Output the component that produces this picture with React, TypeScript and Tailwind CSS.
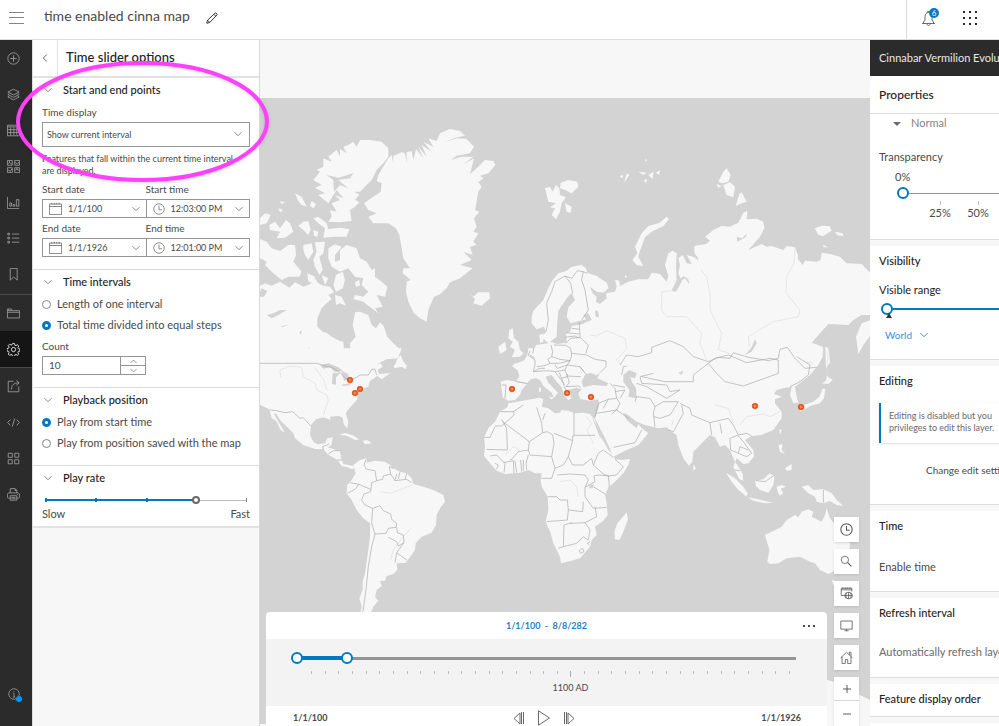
import React from "react";

type IconProps = { className?: string; children: React.ReactNode; box?: number };

function Icon({ className = "size-[14px]", children, box = 16 }: IconProps) {
  return (
    <svg viewBox={`0 0 ${box} ${box}`} className={className} fill="none" stroke="currentColor" strokeWidth={1} aria-hidden="true">
      {children}
    </svg>
  );
}

const Chevron = ({ className = "size-2 text-[#858585]" }: { className?: string }) => (
  <Icon className={className} box={8}><path d="M.5 2.2 4 5.7 7.5 2.2" /></Icon>
);

const ClockIcon = ({ className = "size-3" }: { className?: string }) => (
  <Icon className={className}><circle cx="8" cy="8" r="7" /><path d="M8 3.5V9h4" /></Icon>
);

const CalendarIcon = () => (
  <Icon className="size-[13px] shrink-0 text-[#6a6a6a]">
    <path d="M.5 2.5h15v13H.5zM.5 5.5h15M3.5 1v2M6.500 1v2M9.500 1v2M12.500 1v2" />
  </Icon>
);

type NavItem = { label: string; icon: React.ReactNode; active?: boolean };

const contentNav: NavItem[] = [
  { label: "Add", icon: <><circle cx="8" cy="8" r="7" /><path d="M8 4v8M4 8h8" /></> },
  { label: "Layers", icon: <path d="M8 1.500 15 5 8 8.500 1 5zM3 7 1 8l7 3.500L15 8l-2-1M3 10l-2 1 7 3.500 7-3.500-2-1" /> },
  { label: "Tables", icon: <path d="M.5 1.500h15v13H.5zM.5 3.500h15M.5 7h15M.5 10.500h15M4.500 4v10M8.500 4v10M12 4v10" /> },
  { label: "Basemap", icon: <path d="M.5.5h6v6h-6zM9.500.5h6v6h-6zM.5 9.500h6v6h-6zM9.500 9.500h6v6h-6zM1 5l2-2 3 2M10 3l3 2 2-3M1 12l3 2 2-3M10 13l2-2 3 2M3 1v2M12 10v2" /> },
  { label: "Charts", icon: <path d="M.5 1v14.500H15M3.500 8.500h2v4h-2zM7.500 10.500h2v2h-2zM11.500 4.500h3v8h-3z" /> },
  { label: "Legend", icon: <path d="M1 1.500h2v2H1zM1 6.500h2v2H1zM1 11.500h2v2H1zM6 2.500h9M6 7.500h9M6 12.500h9" /> },
  { label: "Bookmarks", icon: <path d="M4 .5h8.500v14.500l-4.250-4L4 15z" /> },
];

const mapNav: NavItem[] = [
  { label: "Save and open", icon: <path d="M.5 13.500v-11h5l1 2h9v9zM.5 6.500h15M2 2.500v2h4" /> },
  {
    label: "Map properties",
    active: true,
    icon: (
      <>
        <path d="M6.800.7h2.400l.5 2 1.300.6 1.900-1.100 1.600 1.600-1.100 1.900.6 1.300 2 .5v2.400l-2 .5-.6 1.300 1.100 1.900-1.600 1.600-1.900-1.100-1.300.6-.5 2H6.800l-.5-2-1.300-.6-1.900 1.100-1.600-1.600 1.100-1.900-.6-1.300-2-.5V6.800l2-.5.6-1.300L1.500 3.100l1.600-1.600L5 2.600 6.300 2z" />
        <circle cx="8" cy="8" r="2.600" />
      </>
    ),
  },
];

const shareNav: NavItem[] = [
  { label: "Share map", icon: <path d="M8 1.500H1.500v13h13V8M5.500 11.500c0-5 2.500-8 9-8M11.500.5l3.500 3-3.500 3" /> },
  { label: "Embed map", icon: <path d="M4 4.500.8 8 4 11.500M12 4.500 15.200 8 12 11.500M9.500 3l-3 10" /> },
  { label: "Create app", icon: <path d="M1.500 1.500h5v5h-5zM9.500 1.500h5v5h-5zM1.500 9.500h5v5h-5zM9.500 9.500h5v5h-5z" /> },
  { label: "Print", icon: <path d="M4 6V.8h6l2 2V6M10 1v2h2M4 12.500H1.500l-1-1v-4L2 6h12l1.500 1.500v4l-1 1H12M4 9.500h8v5.500H4zM5.500 11.500h5M5.500 13.200h5M12.500 8h1" /> },
];

function NavList({ items }: { items: NavItem[] }) {
  return (
    <>
      {items.map((item) => (
        <button
          key={item.label}
          aria-label={item.label}
          className={item.active ? "flex h-9 w-full items-center pl-[7px] bg-[#151515] text-white" : "flex h-9 w-full items-center pl-[7px] text-[#a3a3a3]"}
        >
          <Icon className="size-[13px]">{item.icon}</Icon>
        </button>
      ))}
    </>
  );
}

function Section({ title, className, children }: { title: string; className: string; children: React.ReactNode }) {
  return (
    <section className={`border-b border-[#dcdcdc] px-[9px] ${className}`}>
      <h3>
        <button className="flex h-6 items-center gap-[11px] pl-[2px] text-[11px] font-medium text-[#222]">
          <Chevron />
          {title}
        </button>
      </h3>
      {children}
    </section>
  );
}

function PickerField({ id, label, value, icon }: { id: string; label: string; value: string; icon: React.ReactNode }) {
  return (
    <div className="min-w-0 flex-1 not-first:-ml-px">
      <label htmlFor={id} className="block h-5 text-[10px] leading-5">{label}</label>
      <div className="flex h-[19px] items-center gap-1.5 border border-[#959595] px-[6px]">
        {icon}
        <input id={id} defaultValue={value} className="w-0 min-w-0 flex-1 text-[9px] outline-none" />
        <Chevron />
      </div>
    </div>
  );
}

function Radio({ name, label, checked }: { name: string; label: string; checked?: boolean }) {
  return (
    <label className="flex h-[21px] items-center gap-1.5 text-[11px]">
      <input
        type="radio"
        name={name}
        defaultChecked={checked}
        className="size-[9px] appearance-none rounded-full border border-[#858585] bg-white checked:border-[3px] checked:border-[#0079c1]"
      />
      {label}
    </label>
  );
}

function OptionsPanel() {
  return (
    <aside className="flex w-[227px] shrink-0 flex-col border-r border-[#d8d8d8] bg-[#f7f7f7] text-[#4a4a4a]">
      <header className="flex h-[38px] shrink-0 items-center border-b-2 border-[#e2e2e2] bg-white">
        <button aria-label="Back" className="flex h-full w-[25px] items-center justify-center border-r border-[#e2e2e2]">
          <Chevron className="size-2 rotate-90 text-[#6a6a6a]" />
        </button>
        <h2 className="pl-2 text-[13px] font-medium text-[#222]">Time slider options</h2>
      </header>
      <div className="border-b-2 border-[#e2e2e2] bg-white">
        <Section title="Start and end points" className="pb-3">
          <label htmlFor="display" className="block h-5 text-[10px] leading-5">Time display</label>
          <div className="relative">
            <select id="display" className="block h-[25px] w-full appearance-none border border-[#959595] px-1 text-[9px]">
              <option>Show current interval</option>
            </select>
            <Chevron className="pointer-events-none absolute top-2 right-2 size-2 text-[#858585]" />
          </div>
          <p className="mt-1.5 mb-0.5 h-6 pr-3 text-[9px] leading-3">Features that fall within the current time interval are displayed.</p>
          <div className="flex">
            <PickerField id="sd" label="Start date" value="1/1/100" icon={<CalendarIcon />} />
            <PickerField id="st" label="Start time" value="12:03:00 PM" icon={<ClockIcon className="size-3 shrink-0 text-[#6a6a6a]" />} />
          </div>
          <div className="flex">
            <PickerField id="ed" label="End date" value="1/1/1926" icon={<CalendarIcon />} />
            <PickerField id="et" label="End time" value="12:01:00 PM" icon={<ClockIcon className="size-3 shrink-0 text-[#6a6a6a]" />} />
          </div>
        </Section>
        <Section title="Time intervals" className="pb-3">
          <Radio name="mode" label="Length of one interval" />
          <Radio name="mode" label="Total time divided into equal steps" checked />
          <label htmlFor="count" className="block h-5 text-[10px] leading-5">Count</label>
          <div className="flex h-[19px] w-[104px] border border-[#959595]">
            <input id="count" defaultValue="10" className="w-0 flex-1 px-1.5 text-[10px] outline-none" />
            <div className="flex w-[25px] flex-col divide-y divide-[#959595] border-l border-[#959595]">
              <button aria-label="Increase" className="flex flex-1 items-center justify-center"><Chevron className="size-[7px] rotate-180 text-[#858585]" /></button>
              <button aria-label="Decrease" className="flex flex-1 items-center justify-center"><Chevron className="size-[7px] text-[#858585]" /></button>
            </div>
          </div>
        </Section>
        <Section title="Playback position" className="pb-[11px]">
          <Radio name="pos" label="Play from start time" checked />
          <Radio name="pos" label="Play from position saved with the map" />
        </Section>
        <section className="px-[9px]">
          <h3>
            <button className="flex h-6 items-center gap-[11px] pl-[2px] text-[11px] font-medium text-[#222]"><Chevron />Play rate</button>
          </h3>
          <div className="relative mt-1.5 flex h-2 items-center px-[3px]">
            <div className="h-0.5 w-3/4 bg-[#0079c1]" />
            <div className="h-px flex-1 bg-[#bdbdbd]" />
            <div className="absolute inset-x-[3px] top-0.5 flex h-1 justify-between">
              {[0, 1, 2, 3, 4].map((n) => <span key={n} className={n < 4 ? "w-0.5 bg-[#0079c1]" : "w-px bg-[#858585]"} />)}
            </div>
            <input
              type="range"
              aria-label="Play rate"
              min={0}
              max={4}
              defaultValue={3}
              className="absolute inset-x-0 h-2 appearance-none bg-transparent [&::-webkit-slider-thumb]:size-2 [&::-webkit-slider-thumb]:appearance-none [&::-webkit-slider-thumb]:rounded-full [&::-webkit-slider-thumb]:border-2 [&::-webkit-slider-thumb]:border-[#6a6a6a] [&::-webkit-slider-thumb]:bg-white"
            />
          </div>
          <div className="flex h-[22px] items-center justify-between pb-0.5 text-[11px]"><span>Slow</span><span>Fast</span></div>
        </section>
      </div>
    </aside>
  );
}

/* Each group is digitised at three units per pixel. */
const americasNorth = [
  "M-5 575 15 565 35 572 60 560 88 578 105 562 130 575 150 568 165 550 175 565 190 572 210 575 222 592 205 600 215 612 200 625 185 640 172 670 172 695 190 712 197 712 215 725 240 738 250 740 252 770 265 780 272 775 270 745 287 725 278 690 285 652 300 650 325 660 335 690 348 700 360 682 372 695 382 725 400 745 422 765 415 790 380 793 340 812H-5Z",
  "M385 190 395 180 400 205 400 183 425 172 435 175 440 205 440 172 455 168 460 195 468 162 490 190 475 155 500 185 485 150 515 170 490 140 520 155 505 130 530 138 540 115 570 102 600 108 615 122 585 128 555 142 590 130 620 132 642 155 630 175 590 182 572 195 605 185 640 185 610 208 642 190 630 238 660 210 675 195 700 198 706 210 685 235 660 242 670 250 655 262 665 275 655 290 650 320 645 345 658 350 642 370 650 395 640 410 655 415 640 440 650 450 630 455 638 480 610 470 635 495 600 510 638 520 600 550 570 562 560 580 540 598 522 605 505 645 500 680 480 670 462 655 445 620 438 590 440 560 452 555 428 535 430 520 450 520 430 490 425 460 418 420 408 400 385 385 340 385 325 365 350 355 325 345 312 325 340 305 362 290 365 265 350 258 355 240Z",
  "M265 150 280 140 290 155 300 135 330 135 365 140 385 160 385 185 370 205 350 225 335 255 320 270 300 290 280 290 298 298 285 315 298 322 285 335 270 345 275 378 240 382 205 380 215 365 210 345 230 350 215 325 240 315 225 300 250 310 230 285 205 325 175 300 195 295 165 278 185 270 160 255 180 230 170 225 190 215 190 190 215 200 205 185 230 165 240 185 240 162 260 175 250 155Z",
  "M160 370 175 365 200 385 205 402 240 398 268 402 260 425 220 425 190 428 195 400 175 385Z",
  "M160 405 175 410 172 425 162 422ZM130 380 145 378 152 405 145 420 130 405 115 392ZM105 295 125 305 140 335 125 330 115 318ZM60 318 75 322 65 328ZM55 340 70 345 60 352ZM155 318 168 328 160 340 150 332ZM-5 375 15 355 32 360 20 385 0 390ZM28 390 45 380 60 400 78 375 90 385 100 410 75 428 50 430 60 410 30 405Z",
  "M-5 430 20 440 35 460 60 468 85 450 105 450 108 480 100 500 125 530 118 545 85 545 65 555 40 535 15 510 20 500 0 490ZM130 450 155 445 160 470 145 495 135 480 130 465ZM165 442 195 440 190 475 178 485 188 525 178 540 165 515 160 495 170 470ZM142 535 165 545 160 565 145 560ZM185 540 205 550 195 570Z",
  "M205 460 225 448 245 455 225 480 225 500 240 495 240 465 260 450 290 460 300 490 320 500 335 525 345 520 345 545 365 560 382 575 375 605 350 600 368 635 345 640 355 655 335 640 310 620 280 612 285 600 310 605 325 590 305 570 310 550 285 545 265 520 240 530 215 515 205 490ZM228 540 248 530 255 555 248 580 228 590 220 570ZM225 600 245 605 258 632 240 625 228 630ZM285 562 298 555 300 572 288 575ZM108 600 118 595ZM628 595 640 605 655 592 688 592 690 610 665 632 640 625 645 612Z",
  "M405 812 410 795 422 780 428 795 438 812Z",
];

const americasSouth = [
  "M-5-5H425L420 8 395 20 362 22 335 45 362 40 368 50 352 60 358 72 385 70 392 68 365 88 352 78 330 92 325 110 305 116 292 130 292 148 268 175 257 190 265 215 262 235 252 225 247 202 235 198 210 200 212 210 190 202 168 208 153 225 150 255 160 275 172 283 195 280 202 265 218 262 214 285 203 292 240 303 243 325 250 342 265 345 280 348 287 352 275 358 262 352 245 348 232 330 205 314 190 298 165 297 130 285 105 265 100 250 82 232 60 210 48 190 42 192 55 215 75 248 62 240 48 212 35 205 28 178 0 165H-5Z",
  "M400 48 415 35 420 20 430 38 440 45 438 58 425 50 405 55ZM238 254 255 249 278 256 298 268 285 270 262 258ZM308 273 320 270 336 279 315 283ZM284 280 294 284Z",
  "M280 345 300 330 320 325 320 338 345 332 375 335 390 345 400 355 420 365 440 370 455 385 460 402 495 412 525 422 550 435 555 455 540 475 530 495 528 525 515 548 485 560 467 580 465 600 450 622 437 638 410 640 412 660 400 672 380 678 375 692 360 693 365 708 350 720 345 740 355 752 340 770 330 795H300L305 770 298 745 308 720 308 695 315 670 325 600 330 560 330 520 310 505 290 480 275 450 260 430 262 405 275 390 287 370Z",
];

const eurasiaNorth = [
  "M95 590 100 572 130 540 145 505 158 480 175 460 200 452 215 440 245 435 258 445 262 458 290 468 320 488 326 505 310 518 290 515 270 500 278 520 290 530 288 545 300 552 320 535 318 520 345 515 350 500 345 480 358 482 360 498 385 485 415 478 445 478 455 458 480 462 500 485 505 468 495 435 505 400 518 392 530 400 528 440 530 480 515 512 528 515 545 485 535 460 540 435 535 415 548 405 560 430 575 432 560 405 580 410 600 425 603 450 592 410 583 400 583 378 618 372 630 362 615 350 640 330 665 318 690 320 715 308 730 278 742 272 740 298 770 296 790 305 793 325 780 350 745 390 785 372 800 380 815 378 850 390 860 378 885 382 895 408 892 415 908 435 915 422 950 425 962 420 965 398 990 402 1020 410 1040 430 1085 432 1112 460V585L1085 585 1060 600 1045 615 985 612 960 640 935 668 968 680 968 710 955 735 935 755H60L35 738 75 720 100 695 108 675 145 670 125 652 138 635 132 620 110 628 95 610Z",
  "M135 205 150 200 158 215 168 195 178 205 180 225 198 232 185 250 180 275 168 298 155 285 165 265 150 262 168 250 145 245ZM182 188 205 180 232 185 235 200 215 220 195 210 180 205ZM195 250 215 260 212 278 200 275Z",
  "M358 168 370 165 368 175ZM380 160 388 165 372 188ZM415 155 440 158 430 165ZM445 165 460 155 458 178ZM468 158 480 150 478 165ZM430 180 442 178 438 190ZM435 118 442 120 438 125Z",
  "M500 290 507 297 490 318 455 335 435 352 420 392 415 410 430 438 410 435 397 420 412 400 405 380 425 340 445 318 480 308Z",
  "M655 185 670 155 680 145 692 165 685 185 665 190ZM650 192 665 198 655 203ZM670 195 690 187 705 200 700 232 680 225ZM718 222 725 217 740 245 725 250 707 258ZM945 325 965 317 988 318 995 332 970 348 955 345ZM1005 335 1028 340 1030 348 1012 346ZM970 375 985 382 970 382ZM645 146 652 148ZM375 465 382 470 375 473Z",
  "M28 630 38 625 42 655 55 665 60 690 70 700 60 710 35 712 45 690 30 680 38 665 25 655ZM-5 680 15 665 20 690 0 702ZM118 645 130 640 130 665 120 668ZM1112 600 1085 610 1068 650 1075 703 1090 675 1112 645ZM976 680 986 685 990 728 978 745Z",
];

const oldWorldSouth = [
  "M145-5 142 15 130 35 100 42 112 58 118 78 110 93 140 100 152 88 170 85 182 92 190 108 215 128 222 143 234 128 205 98 197 80 215 75 230 95 245 112 252 135 265 150 275 145 265 120 290 113 305 118 295 130 300 147 330 152 355 148 358 165 350 190 345 205 360 235 385 285 400 320 440 300 475 285 505 250 485 235 475 222 470 235 440 210 430 190 440 192 470 215 495 225 535 235 560 232 575 245 590 255 595 285 610 325 627 348 637 335 640 305 665 280 690 255 705 262 720 290 735 285 750 300 762 330 775 350 788 372 790 392 778 388 760 350 770 325 790 342 805 340 822 320 820 300 795 270 815 258 845 255 880 240 905 205 905 185 885 160 885 148 905 140 882 132 890 120 910 115 935 110 930 135 940 160 955 158 948 130 945 110 965 95 990 75 1010 50 1025 20 1030-5Z",
  "M62 95 80 90 110 95 140 102 125 120 120 135 105 150 85 152 68 142 65 120Z",
  "M85 160 105 157 140 150 180 143 190 148 185 170 205 175 225 190 240 188 245 180 265 182 285 190 310 188 330 192 345 210 355 240 368 270 385 300 400 315 405 328 425 330 450 327 445 345 430 370 405 395 385 412 375 435 380 460 383 495 370 512 345 530 350 555 335 570 330 590 300 625 275 632 243 640 240 620 220 580 212 550 197 515 205 480 203 440 185 410 182 390 185 370 165 370 145 360 120 368 75 372 50 362 30 340 12 318 15 290 12 262 25 235 45 215 60 185 82 172Z",
  "M440 487 444 508 430 545 418 570 405 568 403 545 412 520 425 505ZM640 343 648 355 640 362ZM738 368 765 385 790 410 803 430 800 440 775 420 755 395ZM803 442 835 448 880 458 855 460 820 452ZM825 392 850 388 870 370 883 380 880 405 865 428 840 420 828 408ZM890 410 905 405 918 410 902 416 910 430 900 437 893 425ZM895 285 908 283 905 300 915 312 900 305ZM915 355 935 342 935 360 920 362ZM898 237 905 240 900 255Z",
  "M965 410 985 405 1000 420 1030 418 1055 430 1070 450 1090 468 1070 465 1050 453 1030 460 1010 455 1005 440 985 430ZM972 165 1000 155 1018 140 1028 115 1036 118 1032 145 1020 160 990 168 975 178ZM1025 100 1038 92 1040 78 1058 90 1045 102ZM955 170 970 172 963 185ZM1095 438 1108 432ZM195 65 200 75ZM177 112 183 114 182 126 177 127ZM205 140 222 142 215 148ZM265 158 282 161Z",
  "M855 555 875 545 905 530 920 510 945 495 955 502 965 485 985 478 1000 485 995 500 1025 515 1035 495 1040 475 1050 505 1062 520 1085 555 1110 580 1108 605 1080 655 1045 672 1020 660 1005 640 990 635 960 620 920 625 895 640 870 642 862 635 868 600ZM1055 690 1075 695 1062 710Z",
];

const seasNorth = [
  "M172 605 175 572 200 535 215 518 225 540 205 562 200 590 212 610 250 600 275 598 248 612 215 618 210 635 198 640 200 668 172 672 150 665 170 650ZM250 585 265 580 275 600 262 605ZM285 570 295 575 297 592 287 590ZM765 658 770 670 755 695 735 705 755 682ZM710 350 725 355 740 342 738 350 712 365ZM540 478 550 468 565 478 568 493 555 475 540 485Z",
];

const seasSouth = [
  "M305 95 315 75 330 68 350 75 360 68 352 85 385 100 380 108 340 105 310 112ZM430 75 448 60 470 70 465 85 452 82 455 95 468 115 470 145 445 140 448 120 430 95ZM595 68 610 62 605 75ZM358 258 368 270 350 225 335 200 345 225ZM328 405 342 403 338 415 328 415Z",
];

const lakes = [
  "M180 45 205 40 235 52 248 62 225 66 210 52 190 56ZM218 68 240 70 228 82 228 104 216 102ZM244 62 265 72 266 88 252 92 248 78ZM245 104 275 98 268 106 248 108Z",
];

const canadaLakes = [
  "M5 580 22 588 12 605 0 605V590ZM20 660 40 655 60 645 80 645 55 660 35 670ZM62 695 88 688 68 697ZM118 712 125 706 123 720ZM130 765 145 768 145 755 158 772 150 776ZM200 240 235 248 280 235 270 250 235 255 265 280 240 270 222 290 220 255Z",
];

const bordersAmerica =
  "M0 40H170L195 48 215 52 240 68 262 90 285 85 300 75 325 75 335 58 345 58 350 75M30 180 50 182 75 188 98 185 120 205 130 203 152 228M190 300 188 290 208 282M205 312 220 302 240 302M232 330 245 330M318 328 312 345 320 358 345 362 350 392 335 398 332 425 312 432 305 450 315 465 338 475 335 520 345 552 335 590 325 650 318 720 308 790M350 392 368 388 370 378 392 372 388 350 400 355M392 372 405 392 410 372M405 392 440 388 455 398M420 365 415 388M440 370 435 388M262 430 285 418 297 403 270 398M297 403 332 418M338 475 360 467 370 482 392 492 395 508 410 520 408 532 385 535 378 550 345 552M410 532 412 548 430 555 432 578 415 588 410 575 385 562M432 578 410 608 440 630M410 608 405 638";
const riversAmerica =
  "M62 82 60 60 90 48 125 52 130 80 165 100 170 120 200 135 205 150 190 195M165 52 180 75 192 90 200 120M362 425 390 430 430 415 458 405M452 535 430 560 400 600 392 630";
const bordersNorth =
  "M138 635 145 600 140 550 155 515 165 485 195 468 215 475 232 452 250 455 262 460M195 468 212 490 218 520M250 455 245 480 255 510 265 570 245 600M360 735 380 705 415 710 455 698 455 682 510 662 550 680 580 710 625 725 655 712 690 715 700 698 745 712 805 722 835 715 840 688 862 682 885 715 915 745 950 742";
const riversNorth =
  "M603 450 620 470 630 520 630 570 665 640 655 690 690 700M885 388 882 430 860 470 858 520 900 570 895 590 820 605 745 650 748 680M515 512 485 515 485 570 500 590 560 590 605 640 600 670 620 720M270 645 290 648 320 632 375 655 380 685 350 720 365 735";
/* Central and eastern Europe, origin at (480, 300). */
const bordersEurope =
  "M150 152 145 166 165 180 165 195 160 215 180 205 195 205M165 175 150 165M162 143 158 160M213 135 218 155 215 170 203 178 210 190 195 197 170 200M222 135 258 136 272 145 275 165 270 182 240 178 215 170M210 190 238 190 270 182M225 195 232 205 262 195 270 182M262 195 300 200 320 225M160 215 200 212 228 215 255 210 262 195M225 215 240 235 250 250 258 272M238 218 245 235 262 230 262 222M255 210 262 228 302 230M262 228 268 248 258 260 295 258 302 262M245 235 252 255M275 160 320 165 345 178 378 183 378 200 360 218M258 130 272 115 300 112 325 135 318 160M298 198 312 215M255 112 285 108 298 115M258 98 298 102M275 85 298 88M298 68 300 112";
const bordersSouth =
  "M100 185 130 165M62 185H102V195L65 228H45M12 262H30L45 230M65 208 80 235 82 300 20 298M68 215 148 275 145 300 115 305 95 328 90 330M148 275 188 248 185 220 170 172M188 248 202 245 218 255 222 280 215 320 150 315 145 300M188 210 195 190M222 250 278 272V258H282V188M282 256H345M278 272 265 320 278 345 310 345 335 325 340 345 370 372 385 378 388 410M265 320 250 345 225 355 215 320M225 355 215 385 185 385M232 375 270 372 315 375 325 390 315 412 315 440 340 475 380 472M388 378 355 375 342 378 345 395 315 412M340 410 375 432M203 440 230 440 240 450 262 450 265 480 262 510 200 515M310 455 308 485 265 480M270 520 315 518 350 500 345 470M315 518 330 540 325 570 310 560 290 580 250 590 252 525 275 518M235 595 250 590M330 575 322 580 328 585M298 602 308 595 312 605 302 610ZM405 328 430 350 410 375 385 378M340 345 355 310 370 300 400 322M30 318 50 315 75 340 72 368M70 338 100 332 102 370M105 332 110 368M122 330 125 365M130 330 130 362M145 315 138 340 140 360M45 340 55 345 50 358";
const bordersAsia =
  "M65 105 78 105 75 145M110 95 140 100M345 200 355 160 385 148 410 145 420 160 410 180 350 190M385 148 370 175M410 145 405 115 390 100M400 105 435 112M405 125 435 120 420 145M410 180 445 205M410 180 395 192M400 292 465 278 485 240M465 155 470 140 510 145 525 170 520 190 525 230M525 170 550 155 595 155 580 180 570 195 540 205 522 200M470 100 500 110 560 145 600 120 570 125 560 105 485 100 480 80 520 70M425 75 430 50 440 48M485 80 555 95 640 95 640 75 685 40 710 70 735 95 790 108 840 90 895 70 895 30 870 25M685 40 705 25 745 15 800 38 870 25M950 20 990 45 985 75 960 95 930 110M600 160 630 175 635 195 690 218 745 205 760 225 775 255 800 250 815 258M605 165 610 190 580 245 565 240M690 218 695 255M720 220 725 250M775 255 750 265 752 300 775 310 800 320 815 310 790 275 775 258M775 310 780 290 805 300M828 392 855 395 880 378M1030 420V458M765 360 780 362";
const riversAsia =
  "M705 165 745 175 760 220M780 225 800 200 850 192 870 200 900 185M318 200 335 220 320 240 340 280M240 395 270 390 290 410 295 440M75 315 100 290 120 300M575 230 580 210M1000 40 970 35M1045-5 1040 80";

const events = [
  [350, 380], [360, 389], [355, 393], [512, 389], [567, 393], [591, 397], [755, 406], [801, 407],
];

const Land = ({ shapes }: { shapes: string[] }) => <>{shapes.map((d, i) => <path key={i} d={d} fill="#f7f7f7" />)}</>;
const Water = ({ shapes }: { shapes: string[] }) => <>{shapes.map((d, i) => <path key={i} d={d} fill="#d3d3d3" />)}</>;
const Border = ({ d }: { d: string }) => <path d={d} fill="none" stroke="#a9a9a9" strokeWidth={2} strokeLinejoin="round" />;
const River = ({ d }: { d: string }) => <path d={d} fill="none" stroke="#dedede" strokeWidth={2} strokeLinejoin="round" />;

function WorldMap() {
  return (
    <svg viewBox="260 98 610 628" preserveAspectRatio="xMinYMin slice" className="absolute inset-0 size-full" role="img" aria-label="World map">
      <defs>
        <radialGradient id="pin">
          <stop offset="0" stopColor="#ffb060" />
          <stop offset="0.5" stopColor="#f26522" />
          <stop offset="1" stopColor="#d84315" />
        </radialGradient>
      </defs>
      <rect x="260" y="98" width="610" height="628" fill="#d3d3d3" />
      <g transform="translate(260 95) scale(.33333)"><Land shapes={americasNorth} /><Water shapes={canadaLakes} /></g>
      <g transform="translate(260 350) scale(.33333)">
        <Land shapes={americasSouth} /><Water shapes={lakes} /><River d={riversAmerica} /><Border d={bordersAmerica} />
      </g>
      <g transform="translate(500 120) scale(.33333)">
        <Land shapes={eurasiaNorth} />
      </g>
      <g transform="translate(480 350) scale(.33333)">
        <Land shapes={oldWorldSouth} /><Water shapes={seasSouth} /><River d={riversAsia} /><Border d={bordersSouth} /><Border d={bordersAsia} />
      </g>
      <g transform="translate(500 120) scale(.33333)">
        <Water shapes={seasNorth} /><River d={riversNorth} /><Border d={bordersNorth} />
      </g>
      <g transform="translate(480 300) scale(.33333)"><Border d={bordersEurope} /></g>
      <path d="M827 680l8 2 23 12 12 6v26h-43zM260 724h6v2h-6z" fill="#f7f7f7" />
      {events.map(([x, y]) => <circle key={`${x}-${y}`} cx={x} cy={y} r="2.800" fill="url(#pin)" stroke="#d9481c" strokeWidth=".6" />)}
    </svg>
  );
}

const thumb =
  "pointer-events-none absolute inset-x-0 h-3 w-full appearance-none bg-transparent [&::-webkit-slider-thumb]:pointer-events-auto [&::-webkit-slider-thumb]:size-3 [&::-webkit-slider-thumb]:appearance-none [&::-webkit-slider-thumb]:rounded-full [&::-webkit-slider-thumb]:border-2 [&::-webkit-slider-thumb]:border-[#0079c1] [&::-webkit-slider-thumb]:bg-white";

function TimeSlider() {
  return (
    <section className="absolute right-[43px] bottom-0 left-[6px] rounded-t-sm bg-white text-[#4a4a4a]" aria-label="Time slider">
      <header className="relative flex h-[27px] items-center justify-center">
        <output className="text-[9px] font-bold whitespace-pre text-[#2a7fc0]">1/1/100  -  8/8/282</output>
        <button aria-label="Options" className="absolute right-3 flex h-full items-center gap-[3px] text-[#4a4a4a]">
          <i className="size-0.5 bg-current" /><i className="size-0.5 bg-current" /><i className="size-0.5 bg-current" />
        </button>
      </header>
      <div className="h-[67px] bg-[#f3f3f3] px-[25px] pt-[13px]">
        <div className="relative flex h-3 items-center px-1.5">
          <div className="h-1 w-[51px] bg-[#0079c1]" />
          <div className="h-[3px] flex-1 bg-[#959595]" />
          <input type="range" aria-label="Interval start" min={0} max={100} defaultValue={0} className={thumb} />
          <input type="range" aria-label="Interval end" min={0} max={100} defaultValue={10} className={thumb} />
        </div>
        <div className="mt-[7px] flex h-2 justify-between pr-3 pl-5">
          {Array.from({ length: 36 }, (_, i) => <span key={i} className={i === 19 ? "h-[6px] w-px bg-[#a9a9a9]" : "h-[3px] w-px bg-[#bdbdbd]"} />)}
        </div>
        <div className="flex h-[18px] items-center justify-center pl-12 text-[9px]"><span>1100 AD</span></div>
      </div>
      <footer className="flex h-5 items-center justify-between pt-1 pr-[26px] pl-[27px] text-[9px] font-bold">
        <span>1/1/100</span>
        <div className="flex items-center gap-3 text-[#6a6a6a]">
          <button aria-label="Previous"><Icon className="size-3" box={12}><path d="M8 1 2 6.500 8 12zM9.500 0v12M11.500 0v12" /></Icon></button>
          <button aria-label="Play"><Icon className="size-4"><path d="m2.500.8 11 7.200-11 7.200z" /></Icon></button>
          <button aria-label="Next"><Icon className="size-3" box={12}><path d="m4 1 6 5.500L4 12zM2.500 0v12M.5 0v12" /></Icon></button>
        </div>
        <span>1/1/1926</span>
      </footer>
    </section>
  );
}

const tools: NavItem[] = [
  { label: "Time", icon: <><circle cx="8" cy="8" r="7" strokeWidth="1.300" /><path d="M8 3.500V9h4" strokeWidth="1.300" /></> },
  { label: "Search", icon: <><circle cx="6" cy="6" r="4.500" /><path d="m9.200 9.200 4.800 4.800" strokeWidth="1.300" /></> },
  { label: "Basemap gallery", icon: <><path d="M6 10.500H1.500v-9h13v4M1.500 3.500h13M3.500.500v2M6.500.500v2M9.500.500v2M12.500.500v2" /><ellipse cx="10.500" cy="10.500" rx="4.800" ry="4" /><path d="M6 10.500h9M10.500 6.500v8M8 7.500c-1 2-1 4 0 6M13 7.500c1 2 1 4 0 6" /></> },
  { label: "Full screen", icon: <path d="M1 2.500h14v10H1zM5.500 14.500h5M8 12.500v2" /> },
  { label: "Home", icon: <path d="M.8 8.500 8 1.500l7.200 7M2.500 7v8.500h4v-5h3v5h4V7M11.500 4.500v-3h2v5" /> },
];

function MapTools() {
  return (
    <div className="absolute right-[11px] bottom-0 flex flex-col gap-[7px] text-[#5a5a5a]">
      {tools.map((tool) => (
        <button key={tool.label} aria-label={tool.label} className="flex size-[25px] items-center justify-center bg-white shadow">
          <Icon className="size-[13px]">{tool.icon}</Icon>
        </button>
      ))}
      <div className="flex flex-col divide-y divide-[#d8d8d8] bg-white shadow">
        <button aria-label="Zoom in" className="flex h-6 w-[25px] items-center justify-center"><Icon className="size-2" box={8}><path d="M4 0v8M0 4h8" /></Icon></button>
        <button aria-label="Zoom out" className="flex h-[25px] w-[25px] items-center justify-center"><Icon className="size-2" box={8}><path d="M0 4h8" /></Icon></button>
      </div>
    </div>
  );
}

function Block({ className, children }: { className: string; children: React.ReactNode }) {
  return <section className={`shrink-0 border-b border-[#dcdcdc] bg-white px-[9px] ${className}`}>{children}</section>;
}

const heading = "h-[30px] text-[11px] leading-[30px] font-medium text-[#222]";
const edgeThumb =
  "absolute inset-x-0 h-3 w-full appearance-none bg-transparent [&::-webkit-slider-thumb]:size-3 [&::-webkit-slider-thumb]:appearance-none [&::-webkit-slider-thumb]:rounded-full [&::-webkit-slider-thumb]:border-2 [&::-webkit-slider-thumb]:border-[#0079c1] [&::-webkit-slider-thumb]:bg-white";

function PropertiesPanel() {
  return (
    <aside className="flex w-[129px] shrink-0 flex-col gap-[6px] overflow-hidden bg-[#f7f7f7] text-[11px] whitespace-nowrap text-[#4a4a4a]">
      <div className="shrink-0 border-b border-[#dcdcdc] bg-white">
        <div className="flex h-9 items-center bg-[#2b2b2b] px-[9px] text-[11px] text-[#e8e8e8]">Cinnabar Vermilion Evolution</div>
        <h2 className="flex h-[38px] items-center border-b border-[#dcdcdc] px-[9px] text-[12px] font-medium text-[#222]">Properties</h2>
        <div className="px-[9px] pb-[18px]">
          <button className="flex h-[19px] items-center gap-2.5 pl-3.5 text-[#858585]">
            <svg viewBox="0 0 8 4" className="h-1 w-2" fill="#6a6a6a" aria-hidden="true"><path d="M0 0h8L4 4z" /></svg>
            Normal
          </button>
          <label htmlFor="alpha" className="mt-[14px] block h-5 leading-5">Transparency</label>
          <div className="mt-[2px] h-4 pl-4 leading-4">0%</div>
          <div className="relative ml-[18px] flex h-4 w-[180px] items-center pl-2">
            <div className="h-px flex-1 bg-[#959595]" />
            <input id="alpha" type="range" defaultValue={0} className={edgeThumb} />
          </div>
          <div className="ml-[42px] flex">
            {["25%", "50%"].map((t) => (
              <span key={t} className="flex w-[38px] shrink-0 flex-col items-center">
                <i className="h-1 w-px bg-[#bdbdbd]" />
                <span className="h-4 leading-4">{t}</span>
              </span>
            ))}
          </div>
        </div>
      </div>
      <Block className="h-[114px]">
        <h3 className={heading}>Visibility</h3>
        <label htmlFor="range" className="block h-[27px] leading-[27px] text-[#222]">Visible range</label>
        <div className="relative ml-[2px] flex h-3 w-[180px] items-center pl-2">
          <div className="h-0.5 flex-1 bg-[#0079c1]" />
          <input id="range" type="range" defaultValue={0} className={edgeThumb} />
          <svg viewBox="0 0 6 5" className="absolute top-[10px] left-[5px] h-[5px] w-1.5" fill="#333" aria-hidden="true"><path d="M3 0l3 5H0z" /></svg>
        </div>
        <button className="mt-2 flex h-6 items-center gap-2 pl-1.5 text-[10px] text-[#3d8fd1]">World <Chevron className="size-2 text-[#3d8fd1]" /></button>
      </Block>
      <Block className="h-[139px]">
        <h3 className={heading}>Editing</h3>
        <p className="mt-[7px] h-10 w-[220px] border-l-2 border-[#0079c1] pt-[7px] pl-2 text-[9px] leading-3 text-[#6a6a6a] shadow-sm">
          Editing is disabled but you<br />privileges to edit this layer.
        </p>
        <button className="mt-[15px] ml-[47px] h-6 text-[10px]">Change edit settings</button>
      </Block>
      <Block className="h-[81px]">
        <h3 className={heading}>Time</h3>
        <div className="mt-4 h-5 leading-5">Enable time</div>
      </Block>
      <Block className="h-[80px]">
        <h3 className={heading}>Refresh interval</h3>
        <div className="mt-3.5 h-5 leading-5 text-[#6a6a6a]">Automatically refresh layer</div>
      </Block>
      <Block className="h-[33px]">
        <h3 className={heading}>Feature display order</h3>
      </Block>
      <div className="min-h-4 flex-1 bg-white" />
    </aside>
  );
}

export default function App() {
  return (
    <div className="relative flex h-screen flex-col overflow-hidden bg-[#f7f7f7] font-['Lato','Liberation_Sans',sans-serif] text-[11px]">
      <header className="flex h-10 shrink-0 items-center border-b border-[#dcdcdc] bg-white pb-1">
        <button aria-label="Menu" className="ml-[9px] flex h-3 w-[15px] flex-col justify-between">
          <i className="h-px w-full bg-[#858585]" /><i className="h-px w-full bg-[#858585]" /><i className="h-px w-full bg-[#858585]" />
        </button>
        <h1 className="ml-5 pb-1 text-[14px] text-[#4a4a4a]">time enabled cinna map</h1>
        <button aria-label="Edit title" className="ml-4 text-[#333]">
          <Icon className="size-3"><path d="m1 15 1-4L12 1.500c1-1 3.500 1.500 2.500 2.500L5 14zM10.500 3l2.500 2.500M2 11l3 3" strokeWidth="1.300" /></Icon>
        </button>
        <div className="-mb-1 ml-auto flex h-10 w-[93px] items-center border-l border-[#dcdcdc] pb-1">
          <button aria-label="Notifications" className="relative ml-[14px] text-[#6a6a6a]">
            <Icon className="size-4"><path d="M1 13.500h13M2.500 13.500V12l1.500-2V6.500c0-2.500 1.500-4 3.500-4s3.500 1.500 3.500 4V10l1.500 2v1.500M6.500 2.500v-1h2v1M6 14c0 2 3 2 3 0" /></Icon>
            <span className="absolute -top-0.5 left-[8px] flex size-[10px] items-center justify-center rounded-full bg-[#0079c1] text-[8px] text-white">6</span>
          </button>
          <button aria-label="Apps" className="ml-[26px] grid grid-cols-3 gap-1">
            {Array.from({ length: 9 }, (_, i) => <i key={i} className="size-0.5 bg-[#2b2b2b]" />)}
          </button>
        </div>
      </header>
      <div className="flex min-h-0 flex-1">
        <nav className="flex w-[33px] shrink-0 flex-col border-r border-[#dcdcdc] bg-[#2b2b2b]">
          <div className="border-b border-[#4a4a4a] pb-0.5"><NavList items={contentNav} /></div>
          <div className="border-b border-[#4a4a4a]"><NavList items={mapNav} /></div>
          <NavList items={shareNav} />
          <button aria-label="Help" className="relative mt-auto mb-[14px] flex h-9 items-center pl-[8px] text-[#a3a3a3]">
            <Icon className="size-3"><circle cx="8" cy="8" r="7" /><path d="M6.500 7H8v5M6.500 12h3M8 4v1" /></Icon>
            <span className="absolute top-5 left-4 size-1.5 rounded-full bg-[#0096ff]" />
          </button>
        </nav>
        <OptionsPanel />
        <main className="flex min-w-0 flex-1 flex-col">
          <div className="h-[58px] shrink-0" />
          <div className="relative min-h-0 flex-1 overflow-hidden">
            <WorldMap />
            <TimeSlider />
            <MapTools />
          </div>
        </main>
        <PropertiesPanel />
      </div>
      <svg viewBox="0 0 256 124" className="pointer-events-none absolute top-[60px] left-[14px] h-[124px] w-64 overflow-visible drop-shadow" aria-hidden="true">
        <ellipse cx="128.500" cy="61.500" rx="124.500" ry="58.500" fill="none" stroke="#ff40ff" strokeWidth="4" />
      </svg>
    </div>
  );
}
